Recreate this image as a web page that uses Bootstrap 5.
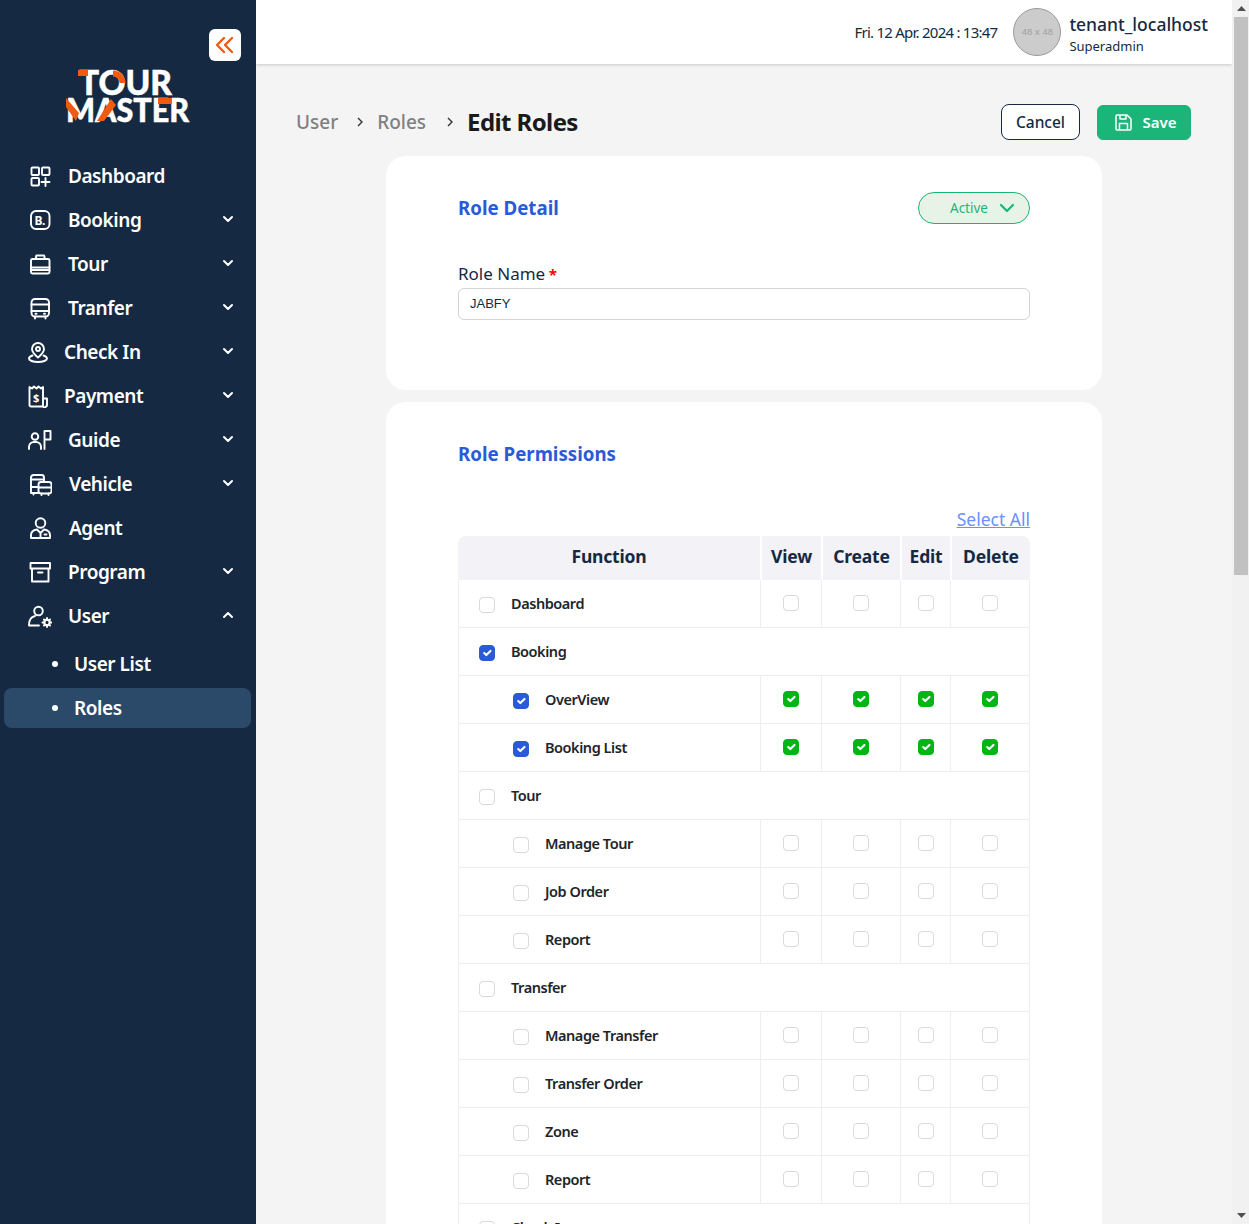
<!DOCTYPE html>
<html lang="en">
<head>
<meta charset="utf-8">
<title>Edit Roles</title>
<link href="https://cdn.jsdelivr.net/npm/bootstrap@5.3.0/dist/css/bootstrap.min.css" rel="stylesheet">
<script src="https://cdn.jsdelivr.net/npm/bootstrap@5.3.0/dist/js/bootstrap.bundle.min.js"></script>
<style>
html,body{height:100%;overflow:hidden;}
body{font-family:"Noto Sans",sans-serif;color:#152a42;background:#f4f4f4;}
.shell{height:100vh;}
.side{width:256px;flex:none;background:#152a42;color:#fff;}
.collapse-btn{width:32px;height:32px;background:#fff;border-radius:6px;margin:29px 15px 0 0;}
.logo-box{margin:7px 0 32px 64px;height:56px;}
.logo-box svg{overflow:visible;display:block;}
.logo-txt{font-family:"Lato",sans-serif;font-weight:900;fill:#fff;stroke:#fff;stroke-width:.5;}
.menu-link{height:40px;margin-bottom:4px;padding-left:28px;padding-right:22px;color:#fff;font-size:19px;font-weight:600;text-decoration:none;letter-spacing:-.45px;}
.menu-link svg.ic{width:24px;height:24px;flex:none;}
.ic *{fill:none;stroke:#fff;stroke-width:1.9;stroke-linecap:round;stroke-linejoin:round;}
.ic text{fill:#fff;stroke:none;font-family:"Noto Sans",sans-serif;font-weight:700;}
.t16{margin-left:16px;}.t12{margin-left:12px;}.t17{margin-left:17px;}
.menu-link svg.chev{margin-left:auto;width:12px;height:12px;margin-top:-2px;}
.chev *{stroke-width:2;}
.sub-first{margin-top:8px;}
.sub-link{margin-left:4px;margin-right:5px;height:40px;margin-bottom:4px;border-radius:8px;padding-left:48px;color:#fff;font-size:19px;font-weight:600;text-decoration:none;letter-spacing:-.45px;}
.sub-link.on{background:#2b4a6a;}
.dot{width:6px;height:6px;border-radius:50%;background:#fff;margin-right:16px;}
.page{overflow:hidden;min-width:0;}
.fakebar{width:17px;flex:none;background:#f1f1f1;}
.fake-arrow{height:17px;flex:none;padding-left:1px;}
.fake-thumb{height:558px;flex:none;background:#c1c1c1;margin:0 1px 0 2px;}
.topbar{height:64px;background:#fff;box-shadow:0 1px 3px rgba(0,0,0,.18);padding-right:24px;position:relative;z-index:5;}
.when{font-size:15px;letter-spacing:-.76px;margin-right:16px;padding-top:1px;}
.avatar{width:48px;height:48px;border-radius:50%;background:#ccc;border:1px solid #9a9a9a;color:#a0a0a0;font-family:"Liberation Sans",sans-serif;font-size:9.5px;margin-right:8px;}
.who{padding-top:3px;}
.uname{font-size:17.5px;font-weight:500;line-height:24px;}
.urole{font-size:13px;line-height:18px;margin-top:1px;}
.crumbs{padding:40px 41px 16px 40px;height:92px;}
.crumb{font-size:19px;font-weight:500;color:#808080;}
.crumb-sep{margin:0 11px 0 16px;width:12px;height:12px;}
.crumb-sep.next{margin:0 11px 0 18px;}
.crumb-now{font-size:24px;font-weight:700;color:#1a1a1a;letter-spacing:-.6px;}
.btn-cancel{width:79px;height:36px;padding:2px 0 0;background:#fff;border:1px solid #152a42;border-radius:8px;color:#152a42;font-size:15.5px;font-weight:500;}
.btn-save{width:94px;height:35px;padding:0 0 0 4px;margin-left:17px;background:#1cb579;border:1px solid #1cb579;border-radius:6px;color:#fff;font-size:15px;font-weight:600;gap:10px;}
.sheet{width:716px;margin:0 auto 12px;background:#fff;border-radius:20px;padding:0 72px;}
.sheet-a{height:234px;padding-top:36px;}
.sheet-b{height:2000px;padding-top:36px;}
.sheet-title{font-size:18.7px;font-weight:700;color:#2a5bd7;margin:0;line-height:32px;}
.pill{width:112px;height:32px;padding:0 14px 0 31px;background:#e8f3e8;border:1px solid #1cb579;border-radius:16px;color:#1cb579;font-size:13.5px;}
.field-label{font-size:17px;line-height:24px;margin:38px 0 2px;display:block;}
.req{color:#f00;font-weight:700;font-size:15px;margin-left:-1px;}
.name-input{height:32px;border-radius:6px;border-color:#d5d5d5;padding:0 11px 1px;font-family:"Liberation Sans",sans-serif;font-size:13px;color:#152a42;}
.select-all{display:block;text-align:right;font-size:17.5px;color:#6e8ffc;line-height:24px;margin:37px 0 5px;}
.perm{width:572px;table-layout:fixed;margin:0;border-collapse:separate;border-spacing:0;}
.perm th{background:#f2f2f7;height:44px;padding:0 0 3px;text-align:center;font-size:17.5px;font-weight:700;color:#152a42;border:0;border-left:2px solid #fff;vertical-align:middle;letter-spacing:-.2px;}
.perm th:first-child{border-left:0;border-top-left-radius:8px;}
.perm th:last-child{border-top-right-radius:8px;}
.perm td{height:48px;padding:0;border:0;border-bottom:1px solid #eee;border-left:1px solid #eee;vertical-align:middle;text-align:center;}
.perm td:last-child{border-right:1px solid #eee;}
.w-fn{width:302px;}.w-v{width:61px;}.w-c{width:79px;}.w-e{width:50px;}.w-d{width:80px;}
.fn{font-size:14.5px;font-weight:600;letter-spacing:-.45px;padding-left:20px;gap:16px;height:47px;}
.fn.lvl2{padding-left:54px;}
.perm .form-check-input{width:16px;height:16px;margin:0;border-radius:4px;border:1px solid #d9d9d9;flex:none;}
.fn .form-check-input{margin-top:2px;}
.perm td>.form-check-input{display:block;margin:-1px auto 0;}
.perm .form-check-input:checked{background-color:#2a5bd7;border-color:#2a5bd7;}
.perm td>.form-check-input:checked{background-color:#00b612;border-color:#00b612;}
</style>
</head>
<body>
<div class="shell d-flex">
<aside class="side d-flex flex-column">
  <div class="d-flex justify-content-end">
    <div class="collapse-btn d-flex align-items-center justify-content-center">
      <svg width="20" height="18" viewBox="0 0 20 18" fill="none" stroke="#f15a0f" stroke-width="2.4" stroke-linecap="round" stroke-linejoin="round"><path d="M9 2L2 9l7 7M17 2l-7 7 7 7"/></svg>
    </div>
  </div>
  <div class="logo-box">
    <svg width="128" height="56" viewBox="0 0 128 56">
      <text class="logo-txt" x="15" y="27" font-size="34" textLength="93" lengthAdjust="spacingAndGlyphs">TOUR</text>
      <text class="logo-txt" x="2" y="54" font-size="33" textLength="123" lengthAdjust="spacingAndGlyphs">MASTER</text>
      <path d="M14 2h10v6H14z" fill="#f15a0f"/>
      <path d="M49 2.500a12.500 12.500 0 0 1 12.500 12.500h-6a6.500 6.500 0 0 0-6.500-6.500z" fill="#f15a0f"/>
      <path d="M2 30l13 15-3 8-10-14z" fill="#f15a0f"/>
      <path d="M47 31l5 6-12 16h-7z" fill="#f15a0f"/>
      <path d="M94 30h14v6H94z" fill="#f15a0f"/>
    </svg>
  </div>
  <nav class="d-flex flex-column">
    <a class="menu-link d-flex align-items-center" href="#"><svg class="ic" viewBox="0 0 24 24"><rect x="3.500" y="3.500" width="7.500" height="7.500" rx="1"/><rect x="14" y="3.500" width="7.500" height="7.500" rx="1"/><rect x="3.500" y="14" width="7.500" height="7.500" rx="1"/><path d="M13.500 18h8M17.500 14v8"/></svg><span class="t16">Dashboard</span></a>
    <a class="menu-link d-flex align-items-center" href="#"><svg class="ic" viewBox="0 0 24 24"><rect x="3" y="3" width="18.500" height="18" rx="5"/><text x="6.500" y="17" font-size="12">B.</text></svg><span class="t16">Booking</span><svg class="chev ic" viewBox="0 0 12 12"><path d="M2 4l4 4 4-4"/></svg></a>
    <a class="menu-link d-flex align-items-center" href="#"><svg class="ic" viewBox="0 0 24 24"><path d="M8 7V4.500a1 1 0 0 1 1-1h6.500a1 1 0 0 1 1 1V7"/><rect x="3" y="7" width="18.500" height="14.500" rx="1.500"/><path d="M3 15.500h18.500M3 18h18.500"/></svg><span class="t16">Tour</span><svg class="chev ic" viewBox="0 0 12 12"><path d="M2 4l4 4 4-4"/></svg></a>
    <a class="menu-link d-flex align-items-center" href="#"><svg class="ic" viewBox="0 0 24 24"><rect x="3.500" y="3" width="17.500" height="17.500" rx="3.500"/><path d="M3.500 8.500h17.500M3.500 15h17.500M7 20.500v2M17.500 20.500v2M7.500 17.800h1M16 17.800h1"/></svg><span class="t16">Tranfer</span><svg class="chev ic" viewBox="0 0 12 12"><path d="M2 4l4 4 4-4"/></svg></a>
    <a class="menu-link d-flex align-items-center" href="#"><svg class="ic" viewBox="0 0 24 24"><path d="M10 3a6 6 0 0 1 6 6c0 3.500-6 8.500-6 8.500S4 12.500 4 9a6 6 0 0 1 6-6z"/><circle cx="10" cy="9" r="2"/><path d="M4.500 15.500C2 16.300 1 17.300 1 18.500c0 2 4 3.500 9 3.500s9-1.500 9-3.500c0-1.200-1-2.200-3.500-3"/></svg><span class="t12">Check In</span><svg class="chev ic" viewBox="0 0 12 12"><path d="M2 4l4 4 4-4"/></svg></a>
    <a class="menu-link d-flex align-items-center" href="#"><svg class="ic" viewBox="0 0 24 24"><path d="M15 22.500H3a1.500 1.500 0 0 1-1.500-1.500V3l2.500 1.500L6 2.500 8.500 4.500 10.500 2.500 13 4.500l2-1.500v18a1.500 1.500 0 0 0 3 1.500 1.500 1.500 0 0 0 1-1.500v-6.500h-4"/><text x="5" y="17.500" font-size="11" font-weight="600">$</text></svg><span class="t12">Payment</span><svg class="chev ic" viewBox="0 0 12 12"><path d="M2 4l4 4 4-4"/></svg></a>
    <a class="menu-link d-flex align-items-center" href="#"><svg class="ic" viewBox="0 0 24 24"><circle cx="7" cy="8.500" r="3.300"/><path d="M1 21v-2.500a5 5 0 0 1 5-4.500h2a5 5 0 0 1 5 4.500V21M16.500 21V3h6v8.500h-6"/></svg><span class="t16">Guide</span><svg class="chev ic" viewBox="0 0 12 12"><path d="M2 4l4 4 4-4"/></svg></a>
    <a class="menu-link d-flex align-items-center" href="#"><svg class="ic" viewBox="0 0 24 24"><path d="M10 21H3v-15.500a2.500 2.500 0 0 1 2.500-2.500h8a2.500 2.500 0 0 1 2.500 2.500V10M3 7.500h13M3 15h7M5.500 21v1.500"/><rect x="10.500" y="10" width="13" height="11.500" rx="2.500"/><path d="M10.500 15.500h13M13.500 21.500v1.500M20.500 21.500v1.500"/></svg><span class="t17">Vehicle</span><svg class="chev ic" viewBox="0 0 12 12"><path d="M2 4l4 4 4-4"/></svg></a>
    <a class="menu-link d-flex align-items-center" href="#"><svg class="ic" viewBox="0 0 24 24"><circle cx="12.500" cy="7" r="4.800"/><path d="M3 22v-3c0-3 3-5 6-5.500l3.500 3.500 3.500-3.500c3 .5 6 2.500 6 5.500v3zM12.500 17v5M16.500 18.500h2"/></svg><span class="t17">Agent</span></a>
    <a class="menu-link d-flex align-items-center" href="#"><svg class="ic" viewBox="0 0 24 24"><path d="M2.500 3h19.500v5.500H2.500zM4 8.500v13h16.500v-13M10 12.500h4.500"/></svg><span class="t16">Program</span><svg class="chev ic" viewBox="0 0 12 12"><path d="M2 4l4 4 4-4"/></svg></a>
    <a class="menu-link d-flex align-items-center mb-0" href="#"><svg class="ic" viewBox="0 0 24 24"><circle cx="10.500" cy="7" r="4.300"/><path d="M1 21c0-4 1.500-8 6-9M1 21.500h10"/><circle cx="19" cy="18.500" r="2.700"/><path d="M19 14v2M19 21v2M14.500 18.500h2M21.500 18.500h2M16 15.500l1 1M21 20.500l1 1M22 15.500l-1 1M17 20.500l-1 1"/></svg><span class="t16">User</span><svg class="chev ic" viewBox="0 0 12 12"><path d="M2 8l4-4 4 4"/></svg></a>
    <a class="sub-link sub-first d-flex align-items-center" href="#"><span class="dot"></span>User List</a>
    <a class="sub-link on d-flex align-items-center" href="#"><span class="dot"></span>Roles</a>
  </nav>
</aside>
<main class="page flex-grow-1">
  <header class="topbar d-flex align-items-center justify-content-end">
    <span class="when">Fri. 12 Apr. 2024 : 13:47</span>
    <div class="avatar d-flex align-items-center justify-content-center">48 x 48</div>
    <div class="who">
      <div class="uname">tenant_localhost</div>
      <div class="urole">Superadmin</div>
    </div>
  </header>
  <div class="crumbs d-flex align-items-center">
    <span class="crumb">User</span>
    <svg class="crumb-sep" viewBox="0 0 12 12" fill="none" stroke="#333" stroke-width="1.4"><path d="M4 2l4 4-4 4"/></svg>
    <span class="crumb">Roles</span>
    <svg class="crumb-sep next" viewBox="0 0 12 12" fill="none" stroke="#333" stroke-width="1.4"><path d="M4 2l4 4-4 4"/></svg>
    <span class="crumb-now">Edit Roles</span>
    <button class="btn btn-cancel ms-auto">Cancel</button>
    <button class="btn btn-save d-flex align-items-center justify-content-center">
      <svg width="17" height="17" viewBox="0 0 17 17" fill="none" stroke="#fff" stroke-width="1.5" stroke-linejoin="round"><path d="M2 1h10l4 4v10a1 1 0 0 1-1 1H2a1 1 0 0 1-1-1V2a1 1 0 0 1 1-1z"/><path d="M5 1v4h6V1M4.500 16v-6.500h8V16"/></svg>Save
    </button>
  </div>
  <section class="sheet sheet-a">
    <div class="d-flex align-items-center justify-content-between">
      <h2 class="sheet-title">Role Detail</h2>
      <button class="btn pill d-flex align-items-center justify-content-between">Active
        <svg width="16" height="10" viewBox="0 0 16 10" fill="none" stroke="#1cb579" stroke-width="2.2" stroke-linecap="round" stroke-linejoin="round"><path d="M2 2l6 6 6-6"/></svg>
      </button>
    </div>
    <label class="field-label" for="rn">Role Name <span class="req">*</span></label>
    <input id="rn" class="form-control name-input" value="JABFY">
  </section>
  <section class="sheet sheet-b">
    <h2 class="sheet-title">Role Permissions</h2>
    <a class="select-all" href="#">Select All</a>
    <table class="table perm">
      <thead><tr><th class="w-fn">Function</th><th class="w-v">View</th><th class="w-c">Create</th><th class="w-e">Edit</th><th class="w-d">Delete</th></tr></thead>
      <tbody id="rows">
        <tr><td><div class="fn d-flex align-items-center"><input class="form-check-input" type="checkbox">Dashboard</div></td><td><input class="form-check-input" type="checkbox"></td><td><input class="form-check-input" type="checkbox"></td><td><input class="form-check-input" type="checkbox"></td><td><input class="form-check-input" type="checkbox"></td></tr>
        <tr><td colspan="5"><div class="fn d-flex align-items-center"><input class="form-check-input" type="checkbox" checked>Booking</div></td></tr>
        <tr><td><div class="fn lvl2 d-flex align-items-center"><input class="form-check-input" type="checkbox" checked>OverView</div></td><td><input class="form-check-input" type="checkbox" checked></td><td><input class="form-check-input" type="checkbox" checked></td><td><input class="form-check-input" type="checkbox" checked></td><td><input class="form-check-input" type="checkbox" checked></td></tr>
        <tr><td><div class="fn lvl2 d-flex align-items-center"><input class="form-check-input" type="checkbox" checked>Booking List</div></td><td><input class="form-check-input" type="checkbox" checked></td><td><input class="form-check-input" type="checkbox" checked></td><td><input class="form-check-input" type="checkbox" checked></td><td><input class="form-check-input" type="checkbox" checked></td></tr>
        <tr><td colspan="5"><div class="fn d-flex align-items-center"><input class="form-check-input" type="checkbox">Tour</div></td></tr>
        <tr><td><div class="fn lvl2 d-flex align-items-center"><input class="form-check-input" type="checkbox">Manage Tour</div></td><td><input class="form-check-input" type="checkbox"></td><td><input class="form-check-input" type="checkbox"></td><td><input class="form-check-input" type="checkbox"></td><td><input class="form-check-input" type="checkbox"></td></tr>
        <tr><td><div class="fn lvl2 d-flex align-items-center"><input class="form-check-input" type="checkbox">Job Order</div></td><td><input class="form-check-input" type="checkbox"></td><td><input class="form-check-input" type="checkbox"></td><td><input class="form-check-input" type="checkbox"></td><td><input class="form-check-input" type="checkbox"></td></tr>
        <tr><td><div class="fn lvl2 d-flex align-items-center"><input class="form-check-input" type="checkbox">Report</div></td><td><input class="form-check-input" type="checkbox"></td><td><input class="form-check-input" type="checkbox"></td><td><input class="form-check-input" type="checkbox"></td><td><input class="form-check-input" type="checkbox"></td></tr>
        <tr><td colspan="5"><div class="fn d-flex align-items-center"><input class="form-check-input" type="checkbox">Transfer</div></td></tr>
        <tr><td><div class="fn lvl2 d-flex align-items-center"><input class="form-check-input" type="checkbox">Manage Transfer</div></td><td><input class="form-check-input" type="checkbox"></td><td><input class="form-check-input" type="checkbox"></td><td><input class="form-check-input" type="checkbox"></td><td><input class="form-check-input" type="checkbox"></td></tr>
        <tr><td><div class="fn lvl2 d-flex align-items-center"><input class="form-check-input" type="checkbox">Transfer Order</div></td><td><input class="form-check-input" type="checkbox"></td><td><input class="form-check-input" type="checkbox"></td><td><input class="form-check-input" type="checkbox"></td><td><input class="form-check-input" type="checkbox"></td></tr>
        <tr><td><div class="fn lvl2 d-flex align-items-center"><input class="form-check-input" type="checkbox">Zone</div></td><td><input class="form-check-input" type="checkbox"></td><td><input class="form-check-input" type="checkbox"></td><td><input class="form-check-input" type="checkbox"></td><td><input class="form-check-input" type="checkbox"></td></tr>
        <tr><td><div class="fn lvl2 d-flex align-items-center"><input class="form-check-input" type="checkbox">Report</div></td><td><input class="form-check-input" type="checkbox"></td><td><input class="form-check-input" type="checkbox"></td><td><input class="form-check-input" type="checkbox"></td><td><input class="form-check-input" type="checkbox"></td></tr>
        <tr><td colspan="5"><div class="fn d-flex align-items-center"><input class="form-check-input" type="checkbox">Check In</div></td></tr>
      </tbody>
    </table>
  </section>
</main>
<div class="fakebar d-flex flex-column">
  <div class="fake-arrow d-flex align-items-center justify-content-center"><svg width="9" height="5" viewBox="0 0 9 5"><path d="M4.500 0L9 5H0z" fill="#505050"/></svg></div>
  <div class="fake-thumb"></div>
  <div class="flex-grow-1"></div>
  <div class="fake-arrow d-flex align-items-center justify-content-center"><svg width="9" height="5" viewBox="0 0 9 5"><path d="M0 0h9L4.500 5z" fill="#505050"/></svg></div>
</div>
</div>
</body>
</html>
